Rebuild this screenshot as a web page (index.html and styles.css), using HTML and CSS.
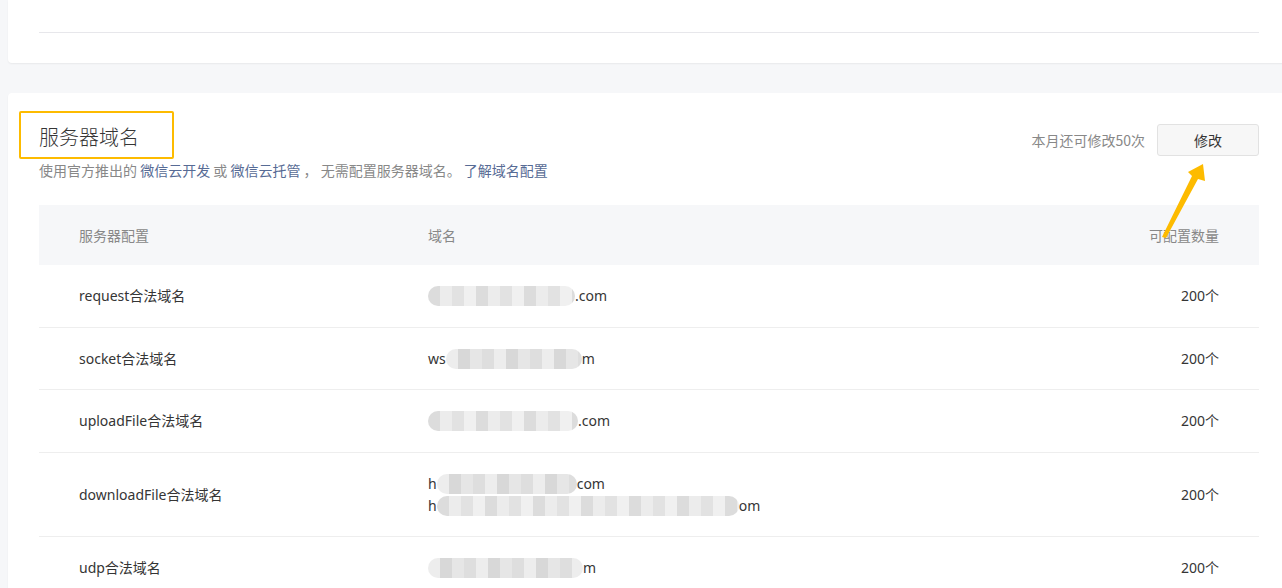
FILE: index.html
```html
<!DOCTYPE html>
<html lang="zh-CN">
<head>
  <meta charset="UTF-8" />
  <title>开发管理 - 服务器域名</title>
  <link rel="stylesheet" href="styles.css">
</head>
<body>
  <div class="page">
    <div class="card card-top">
      <div class="card-top-line"></div>
    </div>

    <div class="card card-domain">
      <div class="section-head">
        <div class="head-left">
          <h3 class="section-title">服务器域名</h3>
          <p class="section-desc">使用官方推出的 <a href="#">微信云开发</a> 或 <a href="#">微信云托管</a> ， 无需配置服务器域名。 <a href="#">了解域名配置</a></p>
        </div>
        <div class="head-right">
          <span class="quota-tip">本月还可修改50次</span>
          <button class="btn-edit">修改</button>
        </div>
      </div>

      <!-- annotation arrow pointing at the button -->
      <svg class="mark-arrow" width="50" height="80" viewBox="0 0 50 80">
        <polygon points="1,76 31,15 27,11 42,3 44,20 37,18 5,77" fill="#fdbb00" />
      </svg>

      <table class="domain-table">
        <thead>
          <tr>
            <th>服务器配置</th>
            <th>域名</th>
            <th class="col-num">可配置数量</th>
          </tr>
        </thead>
        <tbody>
          <tr>
            <td>request合法域名</td>
            <td><span class="mask mask-a" style="width:147px"></span>.com</td>
            <td class="col-num">200个</td>
          </tr>
          <tr>
            <td>socket合法域名</td>
            <td>ws<span class="mask mask-b" style="width:136px"></span>m</td>
            <td class="col-num">200个</td>
          </tr>
          <tr>
            <td>uploadFile合法域名</td>
            <td><span class="mask mask-a" style="width:150px"></span>.com</td>
            <td class="col-num">200个</td>
          </tr>
          <tr>
            <td>downloadFile合法域名</td>
            <td>
              <div>h<span class="mask mask-b" style="width:140px"></span>com</div>
              <div>h<span class="mask mask-a" style="width:302px"></span>om</div>
            </td>
            <td class="col-num">200个</td>
          </tr>
          <tr>
            <td>udp合法域名</td>
            <td><span class="mask mask-b" style="width:155px"></span>m</td>
            <td class="col-num">200个</td>
          </tr>
        </tbody>
      </table>
    </div>
  </div>
</body>
</html>
```

FILE: styles.css
```css
html, body {
  margin: 0;
  padding: 0;
  overflow: hidden;
}

body {
  background-color: #f6f7f9;
  font-family: "Noto Sans", "Noto Sans CJK SC", sans-serif;
  font-size: 14px;
  color: #353535;
}

.page {
  width: 1282px;
  padding-left: 8px;
}

.card {
  background: #fff;
  border-radius: 4px;
  box-shadow: 0 1px 2px rgba(0, 0, 0, 0.06);
  padding: 0 31px;
}

.card-top {
  height: 63px;
  border-radius: 0 0 4px 4px;
  display: flex;
  flex-direction: column;
}

.card-top-line {
  margin-top: 32px;
  border-top: 1px solid #e7e7eb;
}

.card-domain {
  position: relative;
  margin-top: 30px;
  padding-top: 18px;
  padding-bottom: 40px;
}

.section-head {
  display: flex;
  justify-content: space-between;
  align-items: flex-start;
  margin-bottom: 24px;
}

.section-title {
  margin: 0 0 0 -20px;
  width: 155px;
  height: 48px;
  box-sizing: border-box;
  padding: 4px 0 0 18px;
  border: 2px solid #fdbb00;
  border-radius: 2px;
  font-size: 20px;
  font-weight: 300;
  line-height: 40px;
  color: #353535;
  font-family: "Noto Sans CJK SC", sans-serif;
}

.section-desc {
  margin: 0;
  line-height: 22px;
  color: #888;
  font-family: "Noto Sans CJK SC", sans-serif;
  font-size: 14px;
}

.section-desc a {
  color: #576b95;
  text-decoration: none;
}

.head-right {
  display: flex;
  align-items: center;
  gap: 12px;
  margin-top: 13px;
}

.quota-tip {
  color: #888;
  font-family: "Noto Sans CJK SC", sans-serif;
}

.btn-edit {
  width: 102px;
  height: 32px;
  background: #f7f7f7;
  border: 1px solid #e2e2e2;
  border-radius: 3px;
  font-family: "Noto Sans CJK SC", sans-serif;
  font-size: 14px;
  color: #353535;
  cursor: pointer;
}

.mark-arrow {
  position: absolute;
  left: 1153px;
  top: 68px;
}

.domain-table {
  width: 100%;
  border-collapse: collapse;
}

.domain-table th {
  background: #f6f7f9;
  height: 60px;
  padding: 0 40px;
  text-align: left;
  font-weight: normal;
  color: #888;
  font-family: "Noto Sans CJK SC", sans-serif;
}

.domain-table td {
  padding: 20px 40px 19.5px;
  line-height: 22px;
  border-bottom: 1px solid #eeeeee;
  white-space: nowrap;
}

.domain-table th:first-child,
.domain-table td:first-child {
  width: 269px;
}

.domain-table .col-num {
  text-align: right;
}

.mask {
  display: inline-block;
  height: 20px;
  vertical-align: -5px;
  border-radius: 10px;
  background-color: #e3e3e3;
  background-image: repeating-linear-gradient(90deg,
    #dcdcdc 0, #dcdcdc 12px,
    #ececec 12px, #ececec 24px,
    #e2e2e2 24px, #e2e2e2 36px,
    #f0f0f0 36px, #f0f0f0 48px);
}

.mask-b {
  background-image: repeating-linear-gradient(90deg,
    #ededed 0, #ededed 12px,
    #d8d8d8 12px, #d8d8d8 24px,
    #e6e6e6 24px, #e6e6e6 36px,
    #dedede 36px, #dedede 48px);
}
```
